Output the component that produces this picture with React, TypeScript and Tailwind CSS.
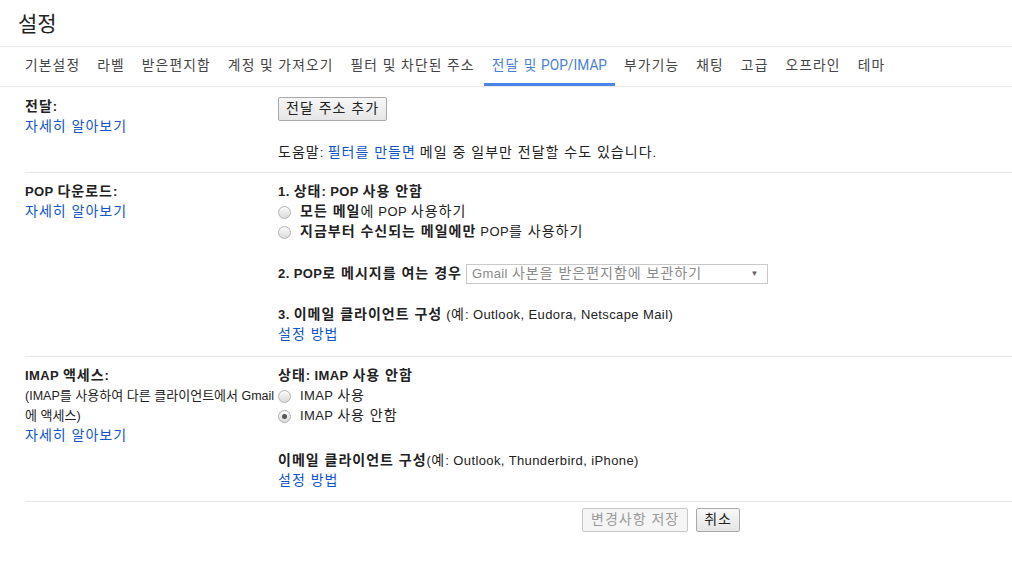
const body = "font-['Liberation_Sans','Noto_Sans_CJK_KR',sans-serif]";

const tabs = [
  "기본설정",
  "라벨",
  "받은편지함",
  "계정 및 가져오기",
  "필터 및 차단된 주소",
  "전달 및 POP/IMAP",
  "부가기능",
  "채팅",
  "고급",
  "오프라인",
  "테마",
];

// hangul runs get a slightly wider setting so they take the room Malgun Gothic would
const HANGUL = /([\u3131-\u318e\uac00-\ud7a3]+(?:\s+[\u3131-\u318e\uac00-\ud7a3]+)*)/;

function H({ s, k = "text-[14px] leading-[14px] tracking-[1px]" }: { s: string; k?: string }) {
  return (
    <span>
      {s.split(HANGUL).map((p, i) =>
        i % 2 ? (
          <span key={i} className={k}>
            {p}
          </span>
        ) : (
          p
        )
      )}
    </span>
  );
}

function Radio({ checked }: { checked?: boolean }) {
  return (
    <span className="flex h-[13px] w-[13px] shrink-0 items-center justify-center rounded-full border border-[#b3b3b3] bg-linear-to-b from-[#fbfbfb] to-[#dadada]">
      {checked && <span className="h-[5px] w-[5px] rounded-full bg-[#555]" />}
    </span>
  );
}

const Link = ({ s }: { s: string }) => (
  <div className="text-[#1155cc]">
    <H s={s} />
  </div>
);

export default function App() {
  return (
    <div className={`min-h-screen bg-white text-[13px] leading-5 tracking-[0.4px] text-[#222] ${body}`}>
      <div className="flex h-[47px] items-center border-b border-[#ebebeb] pb-[2px] pl-[18px] font-['Noto_Sans_CJK_KR',sans-serif] text-[21px] tracking-normal text-[#222]">
        설정
      </div>

      <div className="flex h-[40px] border-b border-[#ebebeb] pl-[17px] font-['Roboto','Noto_Sans_CJK_KR',sans-serif] text-[13.75px] tracking-normal">
        {tabs.map((t) => {
          const active = t === "전달 및 POP/IMAP";
          return (
            <div
              key={t}
              className={`mr-px flex items-center border-b-[3px] px-2 pb-[1px] ${
                active ? "border-[#4a86e8] text-[#4a80d8]" : "border-transparent text-[#444]"
              }`}
            >
              <H s={t} k="tracking-[1.15px]" />
            </div>
          );
        })}
      </div>

      <div className="ml-[25px]">
        {/* 전달 */}
        <section className="grid grid-cols-[253px_1fr] border-b border-[#e5e5e5] pt-[10px] pb-[9px]">
          <div>
            <div className="font-bold">
              <H s="전달:" />
            </div>
            <Link s="자세히 알아보기" />
          </div>
          <div>
            <button className="h-[24px] rounded-[2px] border border-[#a9a9a9] bg-linear-to-b from-[#f7f7f7] to-[#e6e6e6] px-[7px] text-[#222]">
              <H s="전달 주소 추가" />
            </button>
            <div className="mt-[22px]">
              <H s="도움말: " />
              <span className="text-[#1155cc]">
                <H s="필터를 만들면" />
              </span>{" "}
              <H s="메일 중 일부만 전달할 수도 있습니다." />
            </div>
          </div>
        </section>

        {/* POP */}
        <section className="grid grid-cols-[253px_1fr] border-b border-[#e5e5e5] pt-[9px] pb-[11px]">
          <div>
            <div className="font-bold">
              <H s="POP 다운로드:" />
            </div>
            <Link s="자세히 알아보기" />
          </div>
          <div>
            <div className="font-bold">
              <H s="1. 상태: POP 사용 안함" />
            </div>
            <div className="flex items-center gap-[9px]">
              <Radio />
              <span>
                <b>
                  <H s="모든 메일" />
                </b>
                <H s="에 POP 사용하기" />
              </span>
            </div>
            <div className="flex items-center gap-[9px]">
              <Radio />
              <span>
                <b>
                  <H s="지금부터 수신되는 메일에만" />
                </b>{" "}
                <H s="POP를 사용하기" />
              </span>
            </div>
            <div className="mt-[22px] flex h-[20px] items-center gap-[4px]">
              <b className="whitespace-nowrap">
                <H s="2. POP로 메시지를 여는 경우" />
              </b>
              <div className="flex h-[20px] w-[302px] items-center justify-between border border-[#c9c9c9] pr-[8px] pl-[5px] text-[#8a8a8a]">
                <span className="whitespace-nowrap">
                  <H s="Gmail 사본을 받은편지함에 보관하기" />
                </span>
                <span className="text-[8px] text-[#666]">▼</span>
              </div>
            </div>
            <div className="mt-[21px]">
              <b>
                <H s="3. 이메일 클라이언트 구성" />
              </b>{" "}
              <H s="(예: Outlook, Eudora, Netscape Mail)" />
            </div>
            <Link s="설정 방법" />
          </div>
        </section>

        {/* IMAP */}
        <section className="grid grid-cols-[253px_1fr] border-b border-[#e5e5e5] pt-[9px] pb-[10px]">
          <div>
            <div className="font-bold">
              <H s="IMAP 액세스:" />
            </div>
            <div className="whitespace-nowrap text-[12.5px] tracking-normal">
              <H s="(IMAP를 사용하여 다른 클라이언트에서 Gmail" k="text-[13px] leading-[14px] tracking-[0px]" />
              <br />
              <H s="에 액세스)" k="text-[13px] leading-[14px] tracking-[0px]" />
            </div>
            <Link s="자세히 알아보기" />
          </div>
          <div>
            <div className="font-bold">
              <H s="상태: IMAP 사용 안함" />
            </div>
            <div className="flex items-center gap-[9px]">
              <Radio />
              <span>
                <H s="IMAP 사용" />
              </span>
            </div>
            <div className="flex items-center gap-[9px]">
              <Radio checked />
              <span>
                <H s="IMAP 사용 안함" />
              </span>
            </div>
            <div className="mt-[25px]">
              <b>
                <H s="이메일 클라이언트 구성" />
              </b>
              <H s="(예: Outlook, Thunderbird, iPhone)" />
            </div>
            <Link s="설정 방법" />
          </div>
        </section>

        <div className="flex gap-[8px] pt-[6px] pl-[557px]">
          <button className="h-[24px] rounded-[2px] border border-[#c8c8c8] bg-[#f5f5f5] px-[8px] text-[#9a9a9a]">
            <H s="변경사항 저장" />
          </button>
          <button className="h-[24px] rounded-[2px] border border-[#a9a9a9] bg-linear-to-b from-[#f7f7f7] to-[#e6e6e6] px-[7px] text-[#222]">
            <H s="취소" />
          </button>
        </div>
      </div>
    </div>
  );
}
